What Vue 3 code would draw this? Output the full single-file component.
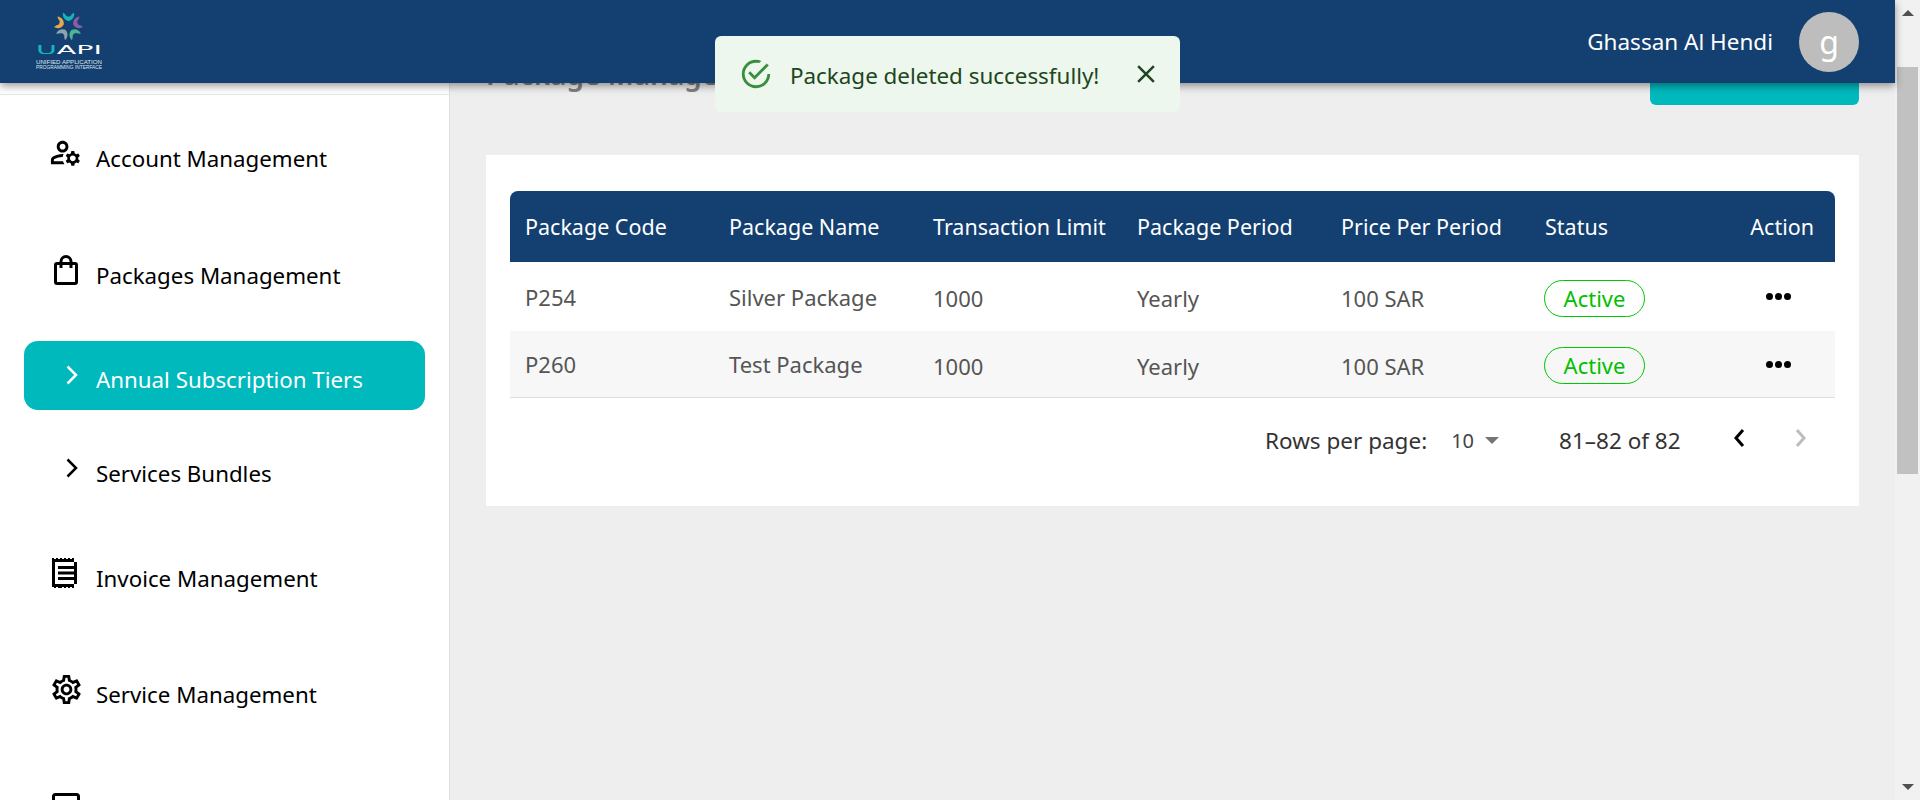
<template>
  <div class="page">
    <div class="window">
      <header class="topbar">
        <svg class="logo" viewBox="0 0 70 60" width="70" height="60">
          <g v-for="p in petals" :key="p.angle" :transform="`translate(32.500 16) rotate(${p.angle})`">
            <path d="M-5.500-13.500C-6.500-9-3.500-5.500 0-5 3.500-5.500 6.500-9 5.500-13.500L3-11.500C2.500-10 1.500-9.500 0-9.500-1.500-9.500-2.500-10-3-11.500Z" :fill="p.color" />
          </g>
          <text x="0" y="44" class="logo-name" textLength="66" lengthAdjust="spacingAndGlyphs"><tspan fill="#18b5bd">U</tspan>API</text>
          <text x="0" y="54" class="logo-sub" textLength="66" lengthAdjust="spacingAndGlyphs">UNIFIED APPLICATION</text>
          <text x="0" y="59" class="logo-sub" textLength="66" lengthAdjust="spacingAndGlyphs">PROGRAMMING INTERFACE</text>
        </svg>
        <div class="user">
          <span class="user-name">Ghassan Al Hendi</span>
          <span class="avatar">g</span>
        </div>
      </header>

      <div class="body">
        <aside class="sidebar">
          <nav class="nav">
            <a class="nav-item account">
              <svg class="nav-icon" viewBox="0 0 24 24" width="35" height="35">
                <path d="M4 18v-.65c0-.34.16-.66.41-.81C6.100 15.530 8.030 15 10 15c.03 0 .05 0 .08.01.1-.7.3-1.370.59-1.980-.22-.02-.44-.03-.67-.03-2.420 0-4.680.67-6.610 1.820-.88.52-1.390 1.500-1.390 2.530V20h9.260c-.42-.6-.75-1.280-.97-2H4z" />
                <path d="M10 12c2.210 0 4-1.790 4-4s-1.790-4-4-4-4 1.790-4 4 1.790 4 4 4zm0-6c1.100 0 2 .9 2 2s-.9 2-2 2-2-.9-2-2 .9-2 2-2z" />
                <path d="M20.750 16c0-.22-.03-.42-.06-.63l1.140-1.010-1-1.730-1.450.49c-.32-.27-.68-.48-1.080-.63L18 11h-2l-.3 1.490c-.4.15-.76.36-1.080.63l-1.450-.49-1 1.730 1.140 1.010c-.03.21-.06.41-.06.63s.03.42.06.63l-1.140 1.010 1 1.730 1.450-.49c.32.27.68.48 1.080.63L16 21h2l.3-1.490c.4-.15.76-.36 1.080-.63l1.450.49 1-1.730-1.140-1.010c.03-.21.06-.41.06-.63zM17 18c-1.100 0-2-.9-2-2s.9-2 2-2 2 .9 2 2-.9 2-2 2z" />
              </svg>
              <span>Account Management</span>
            </a>
            <a class="nav-item packages">
              <svg class="line-icon" viewBox="0 0 24 30" width="24" height="30">
                <rect x="1.500" y="8.500" width="21" height="20" rx="1.500" />
                <path d="M7 13V6.500a5 5 0 0 1 10 0V13" />
              </svg>
              <span>Packages Management</span>
            </a>
            <a class="nav-item sub active">
              <svg class="chevron" viewBox="0 0 12 20" width="12" height="20"><path d="M1.500 1.500 10 10l-8.500 8.500" /></svg>
              <span>Annual Subscription Tiers</span>
            </a>
            <a class="nav-item sub bundles">
              <svg class="chevron" viewBox="0 0 12 20" width="12" height="20"><path d="M1.500 1.500 10 10l-8.500 8.500" /></svg>
              <span>Services Bundles</span>
            </a>
            <a class="nav-item invoice">
              <svg class="nav-icon" viewBox="0 0 28 30" width="28" height="30">
                <path d="M0 0h2v1h2V0h2v1h2V0h2v1h2V0h2v1h2V0h2v1h2V0h2v30h-2v-1h-2v1h-2v-1h-2v1h-2v-1h-2v1h-2v-1H8v1H6v-1H4v1H2v-1H0zM3 4v22h22V4z" />
                <path d="M6 8h16v3H6zM6 13.500h16v3H6zM6 19h16v3H6z" />
              </svg>
              <span>Invoice Management</span>
            </a>
            <a class="nav-item service">
              <svg class="nav-icon" viewBox="0 0 24 24" width="35" height="35">
                <path d="M19.430 12.980c.04-.32.07-.64.07-.98 0-.34-.03-.66-.07-.98l2.110-1.650c.19-.15.24-.42.12-.64l-2-3.460c-.09-.16-.26-.25-.44-.25-.06 0-.12.01-.17.03l-2.490 1c-.52-.4-1.080-.73-1.690-.98l-.38-2.650C14.460 2.180 14.250 2 14 2h-4c-.25 0-.46.18-.49.42l-.38 2.650c-.61.25-1.170.59-1.690.98l-2.490-1c-.06-.02-.12-.03-.18-.03-.17 0-.34.09-.43.25l-2 3.460c-.13.22-.07.49.12.64l2.110 1.650c-.04.32-.07.65-.07.98 0 .33.03.66.07.98l-2.110 1.650c-.19.15-.24.42-.12.64l2 3.460c.09.16.26.25.44.25.06 0 .12-.01.17-.03l2.490-1c.52.4 1.080.73 1.690.98l.38 2.650c.03.24.24.42.49.42h4c.25 0 .46-.18.49-.42l.38-2.650c.61-.25 1.170-.59 1.690-.98l2.490 1c.06.02.12.03.18.03.17 0 .34-.09.43-.25l2-3.460c.12-.22.07-.49-.12-.64l-2.110-1.650zm-1.980-1.710c.04.31.05.52.05.73 0 .21-.02.43-.05.73l-.14 1.130.89.7 1.080.84-.7 1.210-1.270-.51-1.040-.42-.9.68c-.43.32-.84.56-1.250.73l-1.060.43-.16 1.130-.2 1.350h-1.400l-.19-1.350-.16-1.130-1.060-.43c-.43-.18-.83-.41-1.230-.71l-.91-.7-1.060.43-1.270.51-.7-1.210 1.080-.84.89-.7-.14-1.130c-.03-.31-.05-.54-.05-.74s.02-.43.05-.73l.14-1.130-.89-.7-1.080-.84.7-1.210 1.270.51 1.040.42.9-.68c.43-.32.84-.56 1.250-.73l1.060-.43.16-1.130.2-1.350h1.390l.19 1.350.16 1.130 1.060.43c.43.18.83.41 1.230.71l.91.7 1.060-.43 1.270-.51.7 1.210-1.070.85-.89.7.14 1.130zM12 8c-2.210 0-4 1.790-4 4s1.790 4 4 4 4-1.790 4-4-1.790-4-4-4zm0 6c-1.100 0-2-.9-2-2s.9-2 2-2 2 .9 2 2-.9 2-2 2z" />
              </svg>
              <span>Service Management</span>
            </a>
            <a class="nav-item last">
              <svg class="line-icon" viewBox="0 0 28 30" width="28" height="30">
                <rect x="1.500" y="1.500" width="25" height="27" rx="2" />
              </svg>
            </a>
          </nav>
        </aside>

        <main class="content">
          <div class="title-row">
            <h1>Package Management</h1>
            <button class="add-btn">Add Package</button>
          </div>

          <section class="card">
            <div class="grid head">
              <div v-for="c in columns" :key="c" class="cell">{{ c }}</div>
              <div class="cell action-head">Action</div>
            </div>
            <div v-for="r in rows" :key="r.code" class="grid row" :class="r.cls">
              <div class="cell code">{{ r.code }}</div>
              <div class="cell code">{{ r.name }}</div>
              <div class="cell">{{ r.limit }}</div>
              <div class="cell">{{ r.period }}</div>
              <div class="cell">{{ r.price }}</div>
              <div class="cell"><span class="chip">{{ r.status }}</span></div>
              <div class="cell dots"><i></i><i></i><i></i></div>
            </div>
            <div class="pager">
              <span class="pager-label">Rows per page:</span>
              <span class="pager-size">10</span>
              <span class="caret"></span>
              <span class="pager-range">81–82 of 82</span>
              <svg class="pager-arrow" viewBox="0 0 12 20" width="12" height="20"><path d="M10 2 3 10l7 8" /></svg>
              <svg class="pager-arrow off" viewBox="0 0 12 20" width="12" height="20"><path d="m2 2 7 8-7 8" /></svg>
            </div>
          </section>
        </main>
      </div>

      <div class="toast">
        <svg viewBox="0 0 24 24" width="34" height="34" fill="#388e3c">
          <path d="M20,12A8,8 0 0,1 12,20A8,8 0 0,1 4,12A8,8 0 0,1 12,4C12.760,4 13.500,4.110 14.200,4.310L15.770,2.740C14.500,2.260 13.280,2 12,2A10,10 0 0,0 2,12A10,10 0 0,0 12,22A10,10 0 0,0 22,12M7.910,10.080L6.500,11.500L11,16L21,6L19.590,4.580L11,13.170L7.910,10.080Z" />
        </svg>
        <span class="toast-text">Package deleted successfully!</span>
        <svg class="toast-close" viewBox="0 0 24 24" width="30" height="30" fill="#1e4620">
          <path d="M19 6.410 17.590 5 12 10.590 6.410 5 5 6.410 10.590 12 5 17.590 6.410 19 12 13.410 17.590 19 19 17.590 13.410 12z" />
        </svg>
      </div>
    </div>

    <div class="scrollbar">
      <span class="sb-up"></span>
      <div class="sb-thumb"></div>
      <span class="sb-down"></span>
    </div>
  </div>
</template>

<script setup>
const petals = [
  { angle: 0, color: "#17b3b8" },
  { angle: 72, color: "#8a5ba6" },
  { angle: 144, color: "#4db592" },
  { angle: 216, color: "#8fa3ad" },
  { angle: 288, color: "#e3a94c" },
];

const columns = [
  "Package Code",
  "Package Name",
  "Transaction Limit",
  "Package Period",
  "Price Per Period",
  "Status",
];

const rows = [
  { code: "P254", name: "Silver Package", limit: "1000", period: "Yearly", price: "100 SAR", status: "Active", cls: "first" },
  { code: "P260", name: "Test Package", limit: "1000", period: "Yearly", price: "100 SAR", status: "Active", cls: "second" },
];
</script>

<style>
html,
body {
  margin: 0;
  overflow: hidden;
}
</style>

<style scoped>
.page {
  display: flex;
  width: 1920px;
  height: 800px;
  overflow: hidden;
  font-family: "Noto Sans", "Open Sans", sans-serif;
  background: #eeeeee;
}

.window {
  position: relative;
  flex: 1;
  display: flex;
  flex-direction: column;
  min-width: 0;
}

.topbar {
  position: relative;
  z-index: 5;
  height: 83px;
  flex: none;
  display: flex;
  align-items: center;
  justify-content: space-between;
  padding: 0 36px;
  background: #134070;
  box-shadow: 0 3px 8px rgba(0, 0, 0, 0.4);
}

.logo {
  margin-top: -3px;
}

.logo-name {
  font-family: "DejaVu Sans", sans-serif;
  font-size: 12.500px;
  fill: #ffffff;
}

.logo-sub {
  font-family: "Liberation Sans", sans-serif;
  font-size: 5px;
  fill: #dfe6ee;
}

.user {
  display: flex;
  align-items: center;
  gap: 26px;
}

.user-name {
  font-size: 22.500px;
  color: #ffffff;
}

.avatar {
  width: 60px;
  height: 60px;
  border-radius: 50%;
  background: #bdbdbd;
  color: #ffffff;
  font-size: 32px;
  display: flex;
  align-items: center;
  justify-content: center;
}

.body {
  flex: 1;
  display: flex;
  min-height: 0;
}

.sidebar {
  width: 449px;
  flex: none;
  background: #ffffff;
  border-right: 1px solid #e0e0e0;
}

.nav {
  margin-top: 11px;
  border-top: 1px solid #e6e6e6;
  display: flex;
  flex-direction: column;
  padding: 0 24px;
}

.nav-item {
  display: flex;
  align-items: center;
  color: #000000;
  font-size: 22.300px;
  position: relative;
  padding-left: 72px;
}

.nav-icon {
  position: absolute;
  fill: #000000;
}

.line-icon {
  position: absolute;
  fill: none;
  stroke: #000000;
  stroke-width: 3;
}

.account {
  margin-top: 43px;
  height: 40px;
}

.account .nav-icon {
  left: 24px;
  top: -3px;
}

.packages {
  margin-top: 77px;
  height: 40px;
}

.packages .line-icon {
  left: 30px;
  top: 0;
}

.chevron {
  position: absolute;
  left: 42px;
  fill: none;
  stroke: #000000;
  stroke-width: 2.500;
}

.active {
  margin-top: 46px;
  height: 69px;
  background: #00b9bd;
  border-radius: 14px;
  color: #ffffff;
}

.active span {
  margin-top: 8px;
}

.active .chevron {
  stroke: #ffffff;
  top: 24px;
}

.bundles {
  margin-top: 43px;
  height: 40px;
}

.bundles .chevron {
  top: 5px;
}

.invoice {
  margin-top: 65px;
  height: 40px;
}

.invoice .nav-icon {
  left: 28px;
  top: 0;
}

.service {
  margin-top: 76px;
  height: 40px;
}

.service .nav-icon {
  left: 25px;
  top: -2px;
}

.last {
  margin-top: 79px;
  height: 40px;
}

.last .line-icon {
  left: 28px;
  top: 0;
}

.content {
  flex: 1;
  min-width: 0;
  padding: 0 36px;
}

.title-row {
  display: flex;
  align-items: flex-end;
  justify-content: space-between;
  margin-top: -40px;
  height: 62px;
}

.title-row h1 {
  margin: 0 0 12px;
  font-size: 28px;
  font-weight: 600;
  color: #808080;
}

.add-btn {
  width: 209px;
  height: 60px;
  border: none;
  border-radius: 6px;
  padding: 0 24px 20px 0;
  background: #00b9bd;
  color: #ffffff;
  font-family: inherit;
  font-size: 22px;
}

.card {
  margin-top: 50px;
  height: 351px;
  box-sizing: border-box;
  padding: 36px 24px 0;
  background: #ffffff;
}

.grid {
  display: grid;
  grid-template-columns: repeat(6, 204px) 1fr;
  align-items: center;
}

.cell {
  padding-left: 15px;
  font-size: 22px;
  color: #555555;
  white-space: nowrap;
}

.head {
  height: 71px;
  background: #134070;
  border-radius: 8px 8px 0 0;
}

.head .cell {
  font-size: 21.500px;
  color: #ffffff;
}

.action-head {
  padding-left: 0;
  text-align: right;
  padding-right: 21px;
}

.row {
  height: 69px;
}

.row .cell {
  margin-top: 3px;
}

.second {
  height: 67px;
  background: #f7f7f7;
  border-bottom: 1px solid #e0e0e0;
  box-sizing: border-box;
}

.row .code {
  margin-top: 0;
}

.chip {
  display: inline-block;
  width: 101px;
  box-sizing: border-box;
  margin-left: -1px;
  height: 37px;
  line-height: 35px;
  text-align: center;
  border: 1px solid #00c800;
  border-radius: 19px;
  color: #00c000;
}

.row .dots {
  display: flex;
  gap: 2px;
  padding-left: 32px;
  margin-top: 0;
}

.dots i {
  width: 7px;
  height: 7px;
  border-radius: 50%;
  background: #000000;
}

.pager {
  display: flex;
  align-items: center;
  height: 84px;
  padding-left: 755px;
  color: #333333;
  font-size: 22.500px;
}

.pager-size {
  margin-left: 24px;
  font-size: 20px;
  color: #444444;
}

.caret {
  margin-left: 11px;
  border-left: 7px solid transparent;
  border-right: 7px solid transparent;
  border-top: 7px solid #757575;
}

.pager-range {
  margin-left: 60px;
}

.pager-arrow {
  margin-left: 52px;
  margin-top: -4px;
  fill: none;
  stroke: #000000;
  stroke-width: 3;
}

.pager-arrow.off {
  margin-left: 50px;
  stroke: #bdbdbd;
}

.toast {
  position: absolute;
  z-index: 10;
  top: 36px;
  left: 715px;
  width: 465px;
  height: 76px;
  box-sizing: border-box;
  padding-left: 24px;
  display: flex;
  align-items: center;
  background: #edf7ed;
  border-radius: 6px;
}

.toast-text {
  margin-left: 17px;
  margin-top: 3px;
  font-size: 22.400px;
  color: #1e4620;
  white-space: nowrap;
}

.toast-close {
  margin-left: auto;
  margin-right: 19px;
}

.scrollbar {
  width: 25px;
  flex: none;
  display: flex;
  flex-direction: column;
  align-items: center;
  background: #f1f1f1;
}

.sb-up {
  margin-top: 10px;
  border-left: 6px solid transparent;
  border-right: 6px solid transparent;
  border-bottom: 6px solid #505050;
}

.sb-thumb {
  width: 21px;
  height: 407px;
  margin-top: 51px;
  background: #c1c1c1;
}

.sb-down {
  margin-top: auto;
  margin-bottom: 10px;
  border-left: 6px solid transparent;
  border-right: 6px solid transparent;
  border-top: 6px solid #505050;
}
</style>
